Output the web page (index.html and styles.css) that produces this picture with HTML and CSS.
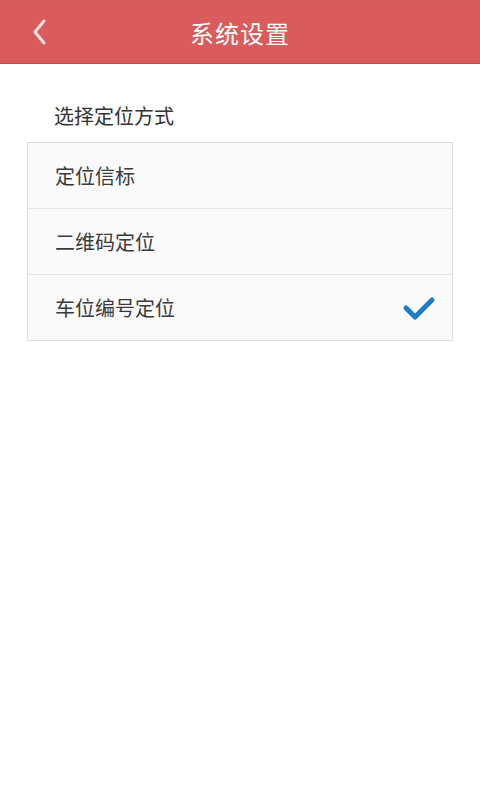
FILE: index.html
```html
<!DOCTYPE html>
<html lang="zh-CN">
<head>
    <meta charset="UTF-8">
    <meta name="viewport" content="width=device-width, initial-scale=1.0">
    <title>系统设置</title>
    <link rel="stylesheet" href="styles.css">
</head>
<body>
    <header class="top-bar">
        <a class="back-btn" href="#">
            <svg width="16" height="28" viewBox="0 0 16 28">
                <polyline points="12,3 3,14 12,25" fill="none" stroke="#fbe3e3" stroke-width="3" stroke-linecap="round" stroke-linejoin="round"/>
            </svg>
        </a>
        <h1 class="title">系统设置</h1>
    </header>

    <main class="content">
        <div class="section-label">选择定位方式</div>
        <ul class="option-list">
            <li class="option">定位信标</li>
            <li class="option">二维码定位</li>
            <li class="option selected">
                车位编号定位
                <svg class="check" width="34" height="26" viewBox="0 0 34 26">
                    <polyline points="4,13 13,22 30,5" fill="none" stroke="#1e7cc8" stroke-width="5" stroke-linecap="round" stroke-linejoin="round"/>
                </svg>
            </li>
        </ul>
    </main>
</body>
</html>
```

FILE: styles.css
```css
body {
    margin: 0;
    font-family: "Noto Sans CJK SC", "Noto Sans", sans-serif;
    background: #ffffff;
    color: #333333;
}

.top-bar {
    position: relative;
    height: 64px;
    background: #d95b5b;
    border-top: 1px solid #cf5a5a;
    border-bottom: 1px solid #b94f4f;
    box-sizing: border-box;
    display: flex;
    align-items: center;
    justify-content: center;
}

.back-btn {
    position: absolute;
    left: 32px;
    top: 17px;
    display: block;
}

.title {
    margin: 0;
    font-size: 24px;
    font-weight: normal;
    color: #ffffff;
    letter-spacing: 1px;
}

.content {
    padding: 38px 27px 0;
}

.section-label {
    font-size: 20px;
    color: #333333;
    padding-left: 27px;
    line-height: 28px;
    margin-bottom: 12px;
}

.option-list {
    list-style: none;
    margin: 0;
    padding: 0;
    border: 1px solid #dddddd;
    background: #fafafa;
}

.option {
    display: flex;
    align-items: center;
    justify-content: space-between;
    height: 65px;
    padding: 0 16px 0 27px;
    font-size: 20px;
    color: #3a3a3a;
    border-top: 1px solid #e6e6e6;
}

.option:first-child {
    border-top: none;
}
```
